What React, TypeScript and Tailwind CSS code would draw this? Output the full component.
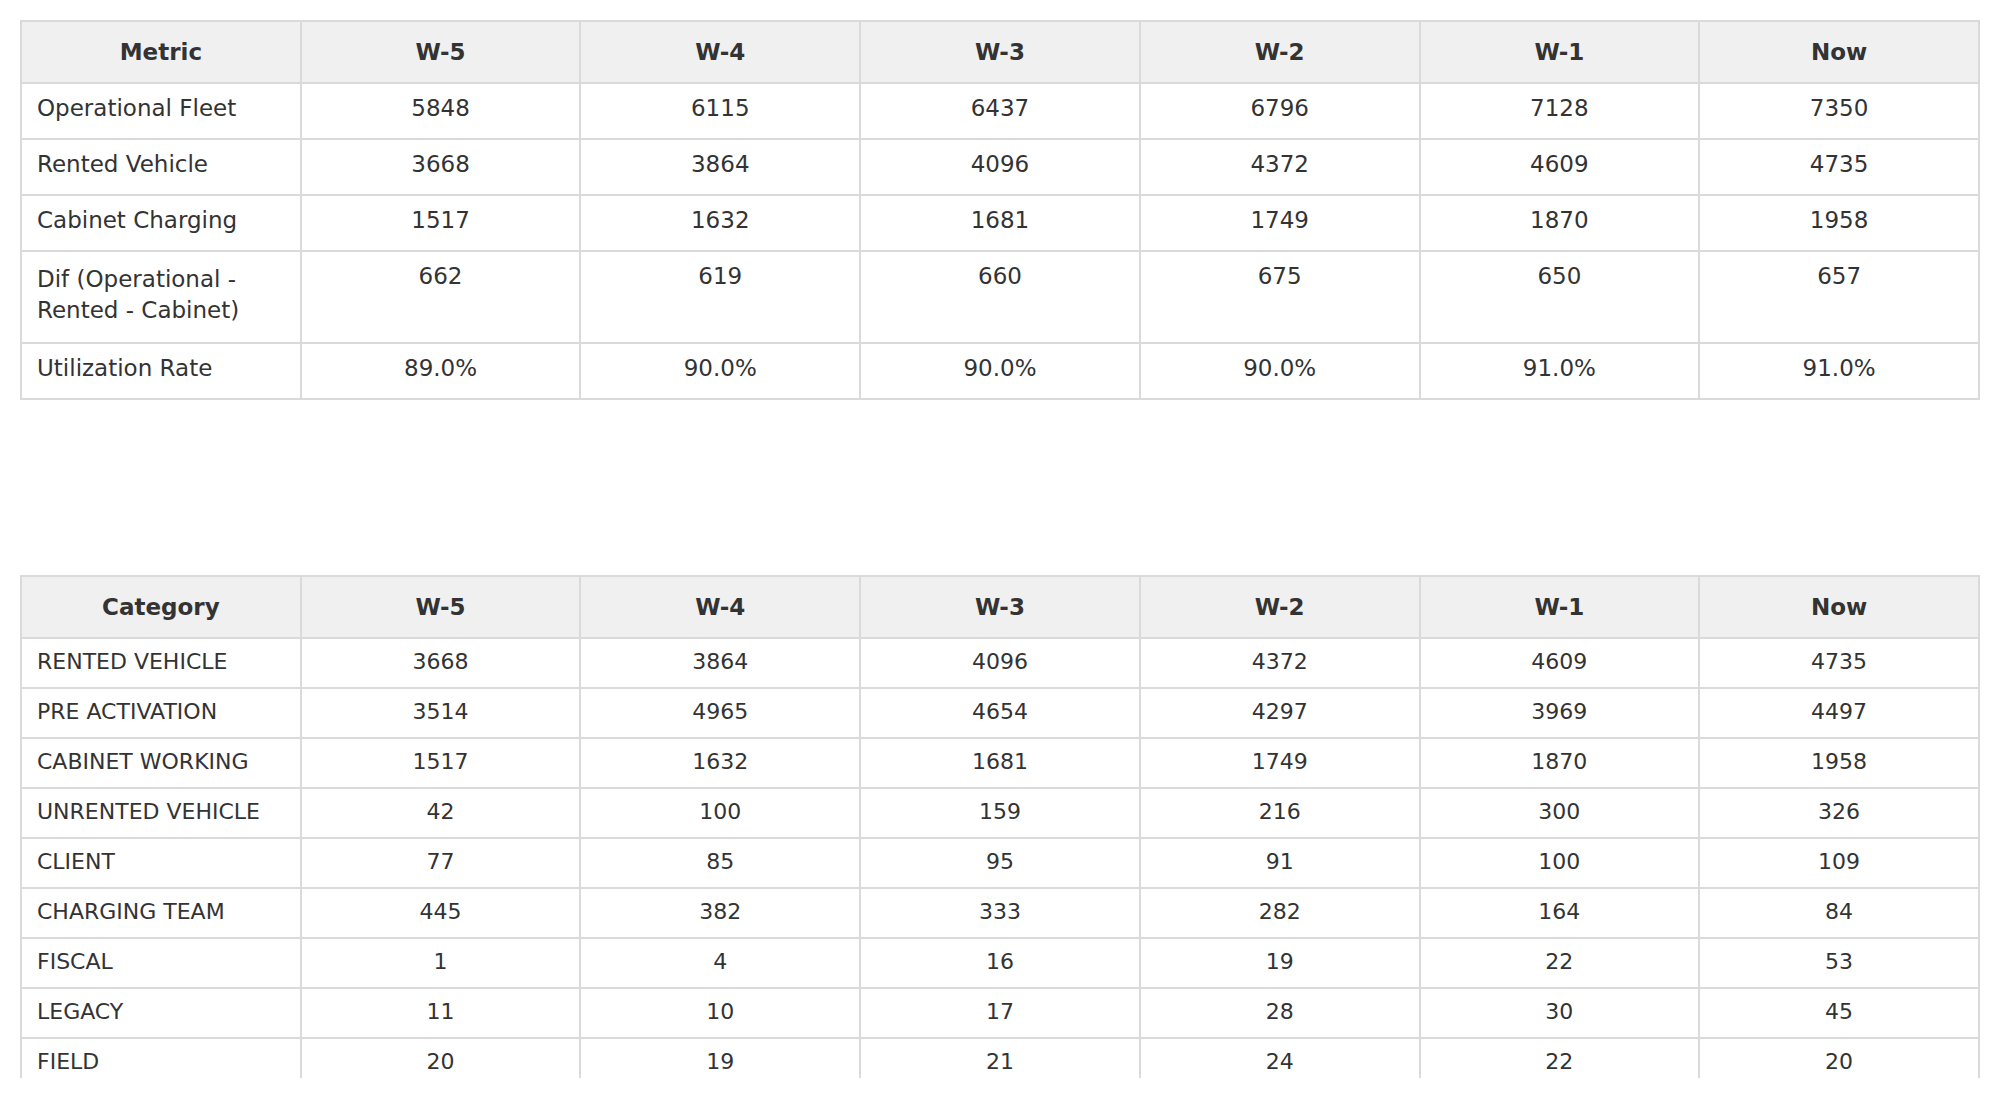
const weeks = ["W-5", "W-4", "W-3", "W-2", "W-1", "Now"];

const metrics = [
  { label: "Operational Fleet", values: ["5848", "6115", "6437", "6796", "7128", "7350"] },
  { label: "Rented Vehicle", values: ["3668", "3864", "4096", "4372", "4609", "4735"] },
  { label: "Cabinet Charging", values: ["1517", "1632", "1681", "1749", "1870", "1958"] },
  { label: "Dif (Operational - Rented - Cabinet)", values: ["662", "619", "660", "675", "650", "657"], tall: true },
  { label: "Utilization Rate", values: ["89.0%", "90.0%", "90.0%", "90.0%", "91.0%", "91.0%"] },
];

const categories = [
  { label: "RENTED VEHICLE", values: ["3668", "3864", "4096", "4372", "4609", "4735"] },
  { label: "PRE ACTIVATION", values: ["3514", "4965", "4654", "4297", "3969", "4497"] },
  { label: "CABINET WORKING", values: ["1517", "1632", "1681", "1749", "1870", "1958"] },
  { label: "UNRENTED VEHICLE", values: ["42", "100", "159", "216", "300", "326"] },
  { label: "CLIENT", values: ["77", "85", "95", "91", "100", "109"] },
  { label: "CHARGING TEAM", values: ["445", "382", "333", "282", "164", "84"] },
  { label: "FISCAL", values: ["1", "4", "16", "19", "22", "53"] },
  { label: "LEGACY", values: ["11", "10", "17", "28", "30", "45"] },
  { label: "FIELD", values: ["20", "19", "21", "24", "22", "20"] },
];

function HeaderRow({ first }: { first: string }) {
  return (
    <thead>
      <tr className="bg-[#f0f0f0]">
        {[first, ...weeks].map((h) => (
          <th
            key={h}
            className="border-2 border-[#dadada] px-[15px] py-[14px] text-center text-[23px] font-bold leading-[32px] text-[#333]"
          >
            {h}
          </th>
        ))}
      </tr>
    </thead>
  );
}

export default function App() {
  return (
    <div className="h-[1078px] overflow-hidden bg-white p-[20px] pb-0 font-['DejaVu_Sans',sans-serif] text-[#333]">
      {/* Weekly metrics */}
      <table className="w-[1960px] table-fixed border-collapse">
        <HeaderRow first="Metric" />
        <tbody>
          {metrics.map((m) => (
            <tr key={m.label} className={m.tall ? "h-[92px]" : ""}>
              <td className="border-2 border-[#dadada] px-[15px] pt-[9px] pb-[14px] text-left align-middle text-[23px] leading-[31px]">
                {m.label}
              </td>
              {m.values.map((v, i) => (
                <td
                  key={i}
                  className={`border-2 border-[#dadada] px-[15px] pt-[9px] pb-[14px] text-center text-[23px] leading-[31px] ${
                    m.tall ? "align-top" : "align-middle"
                  }`}
                >
                  {v}
                </td>
              ))}
            </tr>
          ))}
        </tbody>
      </table>

      {/* Vehicle categories */}
      <table className="mt-[175px] w-[1960px] table-fixed border-collapse">
        <HeaderRow first="Category" />
        <tbody>
          {categories.map((c) => (
            <tr key={c.label}>
              <td className="border-2 border-[#dadada] px-[15px] pt-[9px] pb-[11px] text-left text-[22px] leading-[28px]">
                {c.label}
              </td>
              {c.values.map((v, i) => (
                <td
                  key={i}
                  className="border-2 border-[#dadada] px-[15px] pt-[9px] pb-[11px] text-center text-[22px] leading-[28px]"
                >
                  {v}
                </td>
              ))}
            </tr>
          ))}
        </tbody>
      </table>
    </div>
  );
}
